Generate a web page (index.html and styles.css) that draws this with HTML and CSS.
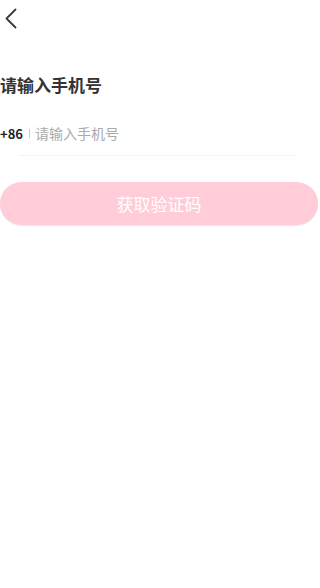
FILE: index.html
```html
<!DOCTYPE html>
<html lang="zh">
<head>
<meta charset="utf-8">
<link rel="stylesheet" href="styles.css">
</head>
<body>
<div class="page">
  <div class="nav">
    <svg class="back" width="14" height="21" viewBox="0 0 14 21"><path d="M11.5 1.5 L2.5 10.5 L11.5 19.5" fill="none" stroke="#3a3a3a" stroke-width="1.8" stroke-linecap="round" stroke-linejoin="round"/></svg>
  </div>
  <h1 class="title">请输入手机号</h1>
  <div class="phone-row">
    <span class="code">+86</span>
    <span class="sep"></span>
    <span class="placeholder">请输入手机号</span>
  </div>
  <div class="line"></div>
  <div class="btn">获取验证码</div>
</div>
</body>
</html>
```
FILE: styles.css
```css
html, body {
  margin: 0;
  padding: 0;
  background: #fff;
}
body {
  font-family: "Noto Sans CJK SC", "Noto Sans", sans-serif;
  width: 320px;
  height: 588px;
  overflow: hidden;
}
.page {
  display: flex;
  flex-direction: column;
}
.nav {
  height: 36px;
  display: flex;
  align-items: center;
  padding-left: 4px;
}
.back {
  display: block;
}
.title {
  margin: 37px 0 0 0;
  font-size: 17px;
  font-weight: 600;
  color: #333;
  line-height: 24px;
}
.phone-row {
  margin-top: 26px;
  display: flex;
  align-items: center;
  height: 20px;
}
.code {
  font-size: 13px;
  font-weight: 700;
  color: #222;
}
.sep {
  width: 1px;
  height: 9px;
  background: #ccc;
  margin: 1px 5px 0 6px;
}
.placeholder {
  font-size: 14px;
  color: #aaa;
}
.line {
  margin: 12px 0 0 18px;
  width: 279px;
  height: 1px;
  background: #f4f4f4;
}
.btn {
  margin-top: 26px;
  width: 318px;
  height: 43px;
  border-radius: 22px;
  background: #ffccd8;
  box-shadow: 0 1px 1px rgba(0,0,0,0.08);
  color: #fff;
  font-size: 17px;
  display: flex;
  align-items: center;
  justify-content: center;
  box-sizing: border-box;
  padding-bottom: 1px;
}
```
